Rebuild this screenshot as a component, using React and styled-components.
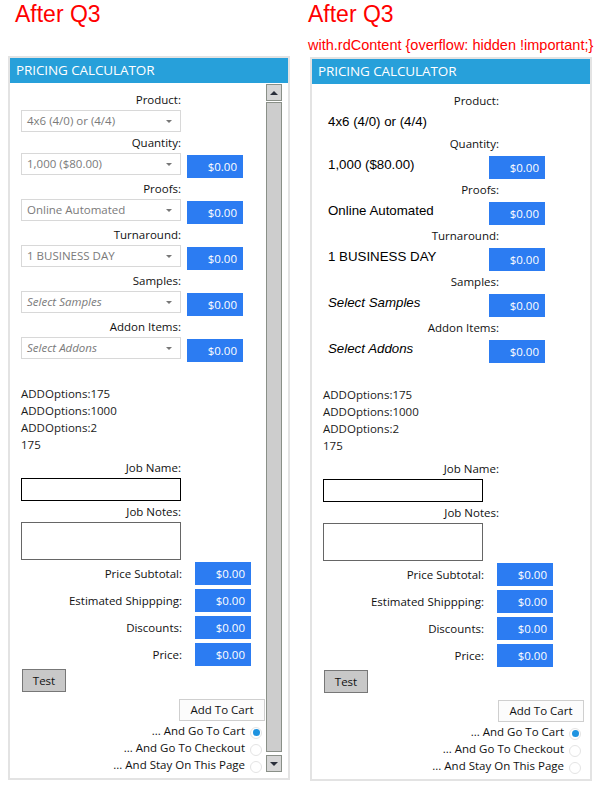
import React from "react";
import styled, { createGlobalStyle } from "styled-components";

const GlobalStyle = createGlobalStyle`
  body {
    margin: 0;
    background: #fff;
    font-family: "Open Sans", "Noto Sans", sans-serif;
  }
`;

const Page = styled.div`
  display: flex;
  gap: 20px;
  padding-left: 8px;
  width: 601px;
  box-sizing: border-box;
`;

const Column = styled.div`
  width: 282px;
  display: flex;
  flex-direction: column;
`;

const Title = styled.div`
  color: #ff0000;
  font-family: "Liberation Sans", Arial, sans-serif;
  font-size: 23px;
  line-height: 28px;
  height: ${(p) => (p.$tall ? "33px" : "56px")};
  padding-left: ${(p) => (p.$indent ? "7px" : "0")};
  margin-left: ${(p) => (p.$shift ? "-2px" : "0")};
`;

const Subtitle = styled.div`
  color: #ff0000;
  font-family: "Liberation Sans", Arial, sans-serif;
  font-size: 14.5px;
  line-height: 24px;
  white-space: nowrap;
  margin-left: -2px;
`;

const Panel = styled.div`
  border: 2px solid #e3e3e3;
  background: #fff;
  display: flex;
  flex-direction: column;
`;

const Header = styled.div`
  height: 25px;
  background: #27a0da;
  color: #fff;
  font-size: 13.5px;
  line-height: 25px;
  padding-left: 6px;
  letter-spacing: -0.1px;
`;

const Body = styled.div`
  display: flex;
  height: 695px;
`;

const Content = styled.div`
  flex: 1;
  padding: 6px ${(p) => (p.$scroll ? "1px" : "6px")} 0 11px;
  font-size: 11.5px;
  color: #111;
`;

const Scrollbar = styled.div`
  width: 16px;
  margin: 1px 6px 6px 0;
  display: flex;
  flex-direction: column;
`;

const ScrollButton = styled.div`
  height: 15px;
  border: 1px solid #8a9088;
  background: #d6d6d6;
  display: flex;
  align-items: center;
  justify-content: center;
  box-sizing: content-box;
  width: 14px;
  &::after {
    content: "";
    border-left: 4px solid transparent;
    border-right: 4px solid transparent;
    ${(p) =>
      p.$down ? "border-top: 4px solid #2a2f3a;" : "border-bottom: 4px solid #2a2f3a;"}
  }
`;

const Thumb = styled.div`
  flex: 1;
  margin: 1px 0 3px;
  background: #cdcdcd;
  border: 1px solid #8a9088;
`;

const FieldLabel = styled.div`
  width: ${(p) => (p.$wide ? "176px" : "160px")};
  text-align: right;
  height: 16px;
  line-height: 16px;
  margin: ${(p) => (p.$gap ? "7px" : "3px")} 0 2px;
  white-space: nowrap;
`;

const FieldRow = styled.div`
  display: flex;
  align-items: flex-start;
`;

const Select = styled.div`
  width: 160px;
  height: 22px;
  box-sizing: border-box;
  border: 1px solid #d8d8d8;
  color: #7a7a7a;
  font-style: ${(p) => (p.$placeholder ? "italic" : "normal")};
  line-height: 20px;
  padding-left: 5px;
  position: relative;
  white-space: nowrap;
  &::after {
    content: "";
    position: absolute;
    right: 8px;
    top: 9px;
    border-left: 3px solid transparent;
    border-right: 3px solid transparent;
    border-top: 3px solid #777;
  }
`;

const PlainValue = styled.div`
  width: 160px;
  height: 22px;
  padding-left: 5px;
  box-sizing: border-box;
  font-family: "Liberation Sans", Arial, sans-serif;
  font-size: 13.3px;
  font-style: ${(p) => (p.$placeholder ? "italic" : "normal")};
  color: #000;
  line-height: 22px;
  white-space: nowrap;
`;

const PriceBox = styled.div`
  width: 56px;
  height: 23px;
  margin: 2px 0 0 6px;
  background: #2c7cf2;
  color: #fff;
  text-align: right;
  padding-right: 6px;
  box-sizing: border-box;
  line-height: 23px;
`;

const Notes = styled.div`
  margin-top: 23px;
  line-height: 17px;
  color: #1a1a1a;
`;

const TextInput = styled.div`
  width: 160px;
  height: 23px;
  box-sizing: border-box;
  border: 1px solid #000;
  margin-top: 2px;
`;

const TextArea = styled.div`
  width: 160px;
  height: 38px;
  box-sizing: border-box;
  border: 1px solid #666;
  margin-top: 2px;
`;

const Totals = styled.div`
  display: flex;
  flex-direction: column;
  gap: 4px;
  margin-top: 2px;
`;

const TotalRow = styled.div`
  display: flex;
  align-items: center;
`;

const TotalLabel = styled.div`
  width: 161px;
  text-align: right;
  white-space: nowrap;
`;

const TotalBox = styled(PriceBox)`
  margin: 0 0 0 13px;
`;

const TestButton = styled.div`
  width: 44px;
  height: 23px;
  box-sizing: border-box;
  margin: 3px 0 0 1px;
  background: #c8c8c8;
  border: 1px solid #777;
  text-align: center;
  line-height: 21px;
`;

const CartArea = styled.div`
  display: flex;
  flex-direction: column;
  align-items: flex-end;
  margin-top: 7px;
`;

const CartButton = styled.div`
  width: 86px;
  height: 22px;
  box-sizing: border-box;
  background: #fcfcfc;
  border: 1px solid #cfcfcf;
  text-align: center;
  line-height: 20px;
  margin-bottom: 1px;
`;

const RadioRow = styled.div`
  display: flex;
  align-items: center;
  height: 17px;
  gap: 5px;
  padding-right: 3px;
  white-space: nowrap;
`;

const Radio = styled.span`
  width: 12px;
  height: 12px;
  box-sizing: border-box;
  border-radius: 50%;
  border: 1px solid #e4e4e4;
  margin-top: 4px;
  display: flex;
  align-items: center;
  justify-content: center;
  &::after {
    content: "";
    width: 7px;
    height: 7px;
    border-radius: 50%;
    background: ${(p) => (p.$checked ? "#1e93e0" : "transparent")};
  }
`;

const fields = [
  { label: "Product:", value: "4x6 (4/0) or (4/4)", price: false },
  { label: "Quantity:", value: "1,000 ($80.00)", price: true },
  { label: "Proofs:", value: "Online Automated", price: true },
  { label: "Turnaround:", value: "1 BUSINESS DAY", price: true },
  { label: "Samples:", value: "Select Samples", price: true, placeholder: true },
  { label: "Addon Items:", value: "Select Addons", price: true, placeholder: true },
];

const totals = ["Price Subtotal:", "Estimated Shippping:", "Discounts:", "Price:"];

const radios = [
  { text: "... And Go To Cart", checked: true },
  { text: "... And Go To Checkout" },
  { text: "... And Stay On This Page" },
];

const Calculator = ({ plain }) => (
  <Panel>
    <Header>PRICING CALCULATOR</Header>
    <Body>
      <Content $scroll={!plain}>
        {fields.map((f) => (
          <div key={f.label}>
            <FieldLabel $wide={plain}>{f.label}</FieldLabel>
            <FieldRow>
              {plain ? (
                <PlainValue $placeholder={f.placeholder}>{f.value}</PlainValue>
              ) : (
                <Select $placeholder={f.placeholder}>{f.value}</Select>
              )}
              {f.price && <PriceBox>$0.00</PriceBox>}
            </FieldRow>
          </div>
        ))}
        <Notes>
          <div>ADDOptions:175</div>
          <div>ADDOptions:1000</div>
          <div>ADDOptions:2</div>
          <div>175</div>
        </Notes>
        <FieldLabel $wide={plain} $gap>Job Name:</FieldLabel>
        <TextInput />
        <FieldLabel $wide={plain}>Job Notes:</FieldLabel>
        <TextArea />
        <Totals>
          {totals.map((t) => (
            <TotalRow key={t}>
              <TotalLabel>{t}</TotalLabel>
              <TotalBox>$0.00</TotalBox>
            </TotalRow>
          ))}
        </Totals>
        <TestButton>Test</TestButton>
        <CartArea>
          <CartButton>Add To Cart</CartButton>
          {radios.map((r) => (
            <RadioRow key={r.text}>
              {r.text}
              <Radio $checked={r.checked} />
            </RadioRow>
          ))}
        </CartArea>
      </Content>
      {!plain && (
        <Scrollbar>
          <ScrollButton />
          <Thumb />
          <ScrollButton $down />
        </Scrollbar>
      )}
    </Body>
  </Panel>
);

export default function App() {
  return (
    <>
      <GlobalStyle />
      <Page>
        <Column>
          <Title $indent>After Q3</Title>
          <Calculator />
        </Column>
        <Column>
          <Title $tall $shift>After Q3</Title>
          <Subtitle>with.rdContent {"{overflow: hidden !important;}"}</Subtitle>
          <Calculator plain />
        </Column>
      </Page>
    </>
  );
}
